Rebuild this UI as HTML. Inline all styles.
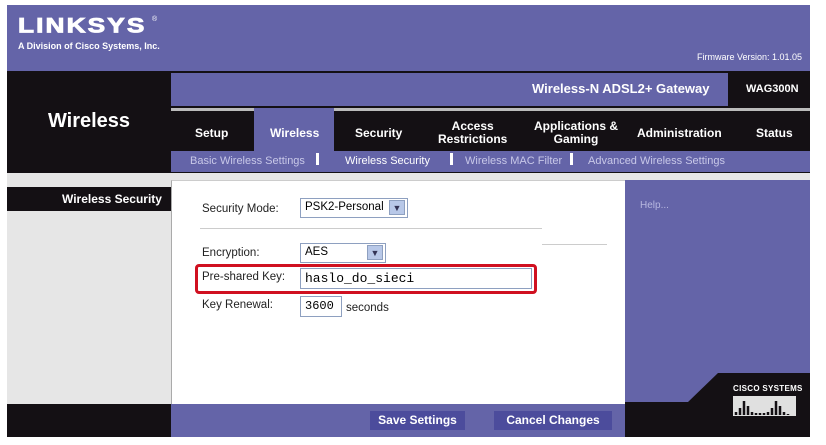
<!DOCTYPE html>
<html><head><style>
body{margin:0;width:826px;height:445px;background:#fff;position:relative;overflow:hidden;font-family:"Liberation Sans",Arial,sans-serif}
div{position:absolute;box-sizing:border-box}
.p{background:#6464a8}.k{background:#141014}
.t{color:#fff;font-weight:bold;font-size:12px;text-align:center}
.lab{font-size:11.5px;color:#222}
.box{border:1px solid #8ea0c0;background:#fff;font-size:11.5px;padding:2px 4px}
.arr{background:#b8c8e8;border:1px solid #8ea0c0;width:16px;height:15px;top:1px;font-size:9px;color:#335;text-align:center;line-height:14px}
.s{top:155px;font-size:11px;color:#c8c8e8;white-space:nowrap}
.bar{top:153px;width:3px;height:12px;background:#fff}
</style></head><body>
<div class="p" style="left:7px;top:5px;width:803px;height:66px"></div>
<div style="left:18px;top:14px;color:#fff;font-weight:900;font-size:25px;letter-spacing:2px;font-family:'Liberation Sans',sans-serif;transform:scale(1.05,0.85);transform-origin:top left;-webkit-text-stroke:1px #fff">LINKSYS</div>
<div style="left:152px;top:16px;color:#fff;font-size:7px">®</div>
<div style="left:18px;top:41px;color:#fff;font-size:9px;font-weight:bold">A Division of Cisco Systems, Inc.</div>
<div style="left:697px;top:52px;color:#fff;font-size:9px;white-space:nowrap">Firmware Version: 1.01.05</div>
<div class="k" style="left:7px;top:71px;width:803px;height:102px"></div>
<div class="p" style="left:171px;top:73px;width:557px;height:33px"></div>
<div class="t" style="left:532px;top:81px;font-size:13px">Wireless-N ADSL2+ Gateway</div>
<div class="t" style="left:746px;top:83px;font-size:11px">WAG300N</div>
<div style="left:171px;top:108px;width:639px;height:3px;background:#bbb"></div>
<div class="t" style="left:7px;width:164px;top:110px;font-size:20px">Wireless</div>
<div class="p" style="left:254px;top:108px;width:80px;height:44px"></div>
<div class="t" style="left:195px;top:126px">Setup</div>
<div class="t" style="left:270px;top:126px">Wireless</div>
<div class="t" style="left:355px;top:126px">Security</div>
<div class="t" style="left:438px;top:120px;line-height:13px">Access<br>Restrictions</div>
<div class="t" style="left:534px;top:120px;line-height:13px">Applications &amp;<br>Gaming</div>
<div class="t" style="left:637px;top:126px">Administration</div>
<div class="t" style="left:756px;top:126px">Status</div>
<div class="p" style="left:171px;top:151px;width:639px;height:21px"></div>
<div class="s" style="left:190px">Basic Wireless Settings</div>
<div class="bar" style="left:316px"></div>
<div class="s" style="left:345px;color:#fff">Wireless Security</div>
<div class="bar" style="left:450px"></div>
<div class="s" style="left:465px">Wireless MAC Filter</div>
<div class="bar" style="left:570px"></div>
<div class="s" style="left:588px">Advanced Wireless Settings</div>
<div style="left:7px;top:173px;width:803px;height:231px;background:#e6e6e6"></div>
<div class="k" style="left:7px;top:187px;width:164px;height:24px"></div>
<div class="t" style="left:62px;top:192px">Wireless Security</div>
<div style="left:171px;top:180px;width:454px;height:224px;background:#fff;border-left:1px solid #aaa;border-top:1px solid #ccc"></div>
<div class="p" style="left:625px;top:180px;width:185px;height:224px"></div>
<div style="left:640px;top:200px;color:#b8b8e0;font-size:10px">Help...</div>
<div class="lab" style="left:202px;top:203px">Security Mode:</div>
<div class="box" style="left:300px;top:198px;width:108px;height:20px">PSK2-Personal<div class="arr" style="left:88px">▼</div></div>
<div style="left:200px;top:228px;width:342px;height:1px;background:#ccc"></div>
<div style="left:542px;top:244px;width:65px;height:1px;background:#ccc"></div>
<div class="lab" style="left:202px;top:247px">Encryption:</div>
<div class="box" style="left:300px;top:243px;width:86px;height:20px">AES<div class="arr" style="left:66px">▼</div></div>
<div style="left:195px;top:264px;width:342px;height:30px;border:3px solid #d01020;border-radius:4px"></div>
<div class="lab" style="left:202px;top:271px">Pre-shared Key:</div>
<div class="box" style="left:300px;top:268px;width:232px;height:21px;font-family:'Liberation Mono',monospace;font-size:13px;padding-top:2px">haslo_do_sieci</div>
<div class="lab" style="left:202px;top:299px">Key Renewal:</div>
<div class="box" style="left:300px;top:296px;width:42px;height:21px;font-family:'Liberation Mono',monospace;font-size:12px">3600</div>
<div class="lab" style="left:346px;top:302px">seconds</div>
<div class="k" style="left:7px;top:404px;width:164px;height:33px"></div>
<div class="p" style="left:171px;top:404px;width:454px;height:33px"></div>
<svg style="position:absolute;left:625px;top:373px" width="185" height="64"><polygon points="93,0 185,0 185,64 0,64 0,29 63,29" fill="#141014"/></svg>
<div style="left:733px;top:384px;color:#fff;font-size:8px;font-weight:bold;letter-spacing:0.3px;white-space:nowrap">CISCO SYSTEMS</div>
<div style="left:733px;top:396px;width:63px;height:20px;background:#e0e0e0"></div>
<svg style="position:absolute;left:733px;top:396px" width="66" height="20"><path d="M3 19V16M7 19V12M11 19V5M15 19V10M19 19V16M23 19V17M27 19V17M31 19V17M35 19V16M39 19V12M43 19V5M47 19V10M51 19V16M55 19V18" stroke="#141014" stroke-width="2.5"/></svg>
<div class="t" style="left:370px;top:411px;width:95px;height:19px;background:#4c4c9c;line-height:19px">Save Settings</div>
<div class="t" style="left:494px;top:411px;width:118px;height:19px;background:#4c4c9c;line-height:19px">Cancel Changes</div>
</body></html>
